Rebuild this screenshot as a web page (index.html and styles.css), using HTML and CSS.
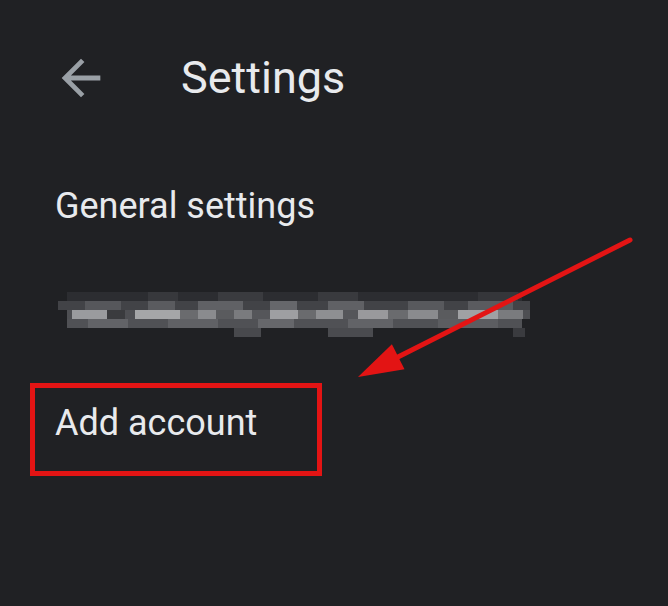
FILE: index.html
```html
<!DOCTYPE html>
<html>
<head>
<meta charset="utf-8">
<link rel="stylesheet" href="styles.css">
</head>
<body>
<div class="screen">
  <header class="topbar">
    <svg class="back" viewBox="0 0 24 24" width="58" height="58"><path d="M20 11H7.83l5.59-5.59L12 4l-8 8 8 8 1.41-1.41L7.83 13H20v-2z" fill="#9aa0a6"/></svg>
    <h1 class="title">Settings</h1>
  </header>
  <ul class="menu">
    <li class="item">General settings</li>
    <li class="item email">
      <svg width="472" height="45" viewBox="0 0 472 45" class="pix">
        <rect x="9" y="0" width="455" height="9" fill="#2c2d31"/>
        <rect x="90" y="0" width="30" height="9" fill="#37383c"/>
        <rect x="160" y="0" width="45" height="9" fill="#3a3b3f"/>
        <rect x="260" y="0" width="40" height="9" fill="#393a3e"/>
        <rect x="420" y="0" width="40" height="9" fill="#35363a"/>
        <rect x="0" y="9" width="472" height="9" fill="#424347"/>
        <rect x="27" y="9" width="36" height="9" fill="#56575b"/>
        <rect x="90" y="9" width="27" height="9" fill="#5a5b5f"/>
        <rect x="140" y="9" width="45" height="9" fill="#606165"/>
        <rect x="212" y="9" width="27" height="9" fill="#66676b"/>
        <rect x="270" y="9" width="36" height="9" fill="#606165"/>
        <rect x="350" y="9" width="36" height="9" fill="#58595d"/>
        <rect x="410" y="9" width="45" height="9" fill="#5a5b5f"/>
        <rect x="9" y="18" width="463" height="9" fill="#4e4f53"/>
        <rect x="14" y="18" width="35" height="9" fill="#9a9b9e"/>
        <rect x="49" y="18" width="18" height="9" fill="#3a3b3e"/>
        <rect x="77" y="18" width="45" height="9" fill="#a5a6a8"/>
        <rect x="122" y="18" width="18" height="9" fill="#6a6b6e"/>
        <rect x="140" y="18" width="18" height="9" fill="#8a8b8e"/>
        <rect x="158" y="18" width="18" height="9" fill="#5a5b5e"/>
        <rect x="176" y="18" width="18" height="9" fill="#7a7b7e"/>
        <rect x="194" y="18" width="18" height="9" fill="#55565a"/>
        <rect x="212" y="18" width="28" height="9" fill="#9e9fa2"/>
        <rect x="240" y="18" width="18" height="9" fill="#6a6b6e"/>
        <rect x="258" y="18" width="27" height="9" fill="#8e8f92"/>
        <rect x="285" y="18" width="15" height="9" fill="#55565a"/>
        <rect x="300" y="18" width="30" height="9" fill="#99999c"/>
        <rect x="330" y="18" width="20" height="9" fill="#6a6b6e"/>
        <rect x="350" y="18" width="30" height="9" fill="#8a8b8e"/>
        <rect x="380" y="18" width="20" height="9" fill="#5a5b5e"/>
        <rect x="400" y="18" width="40" height="9" fill="#a0a1a4"/>
        <rect x="440" y="18" width="25" height="9" fill="#7a7b7e"/>
        <rect x="9" y="27" width="455" height="9" fill="#505155"/>
        <rect x="30" y="27" width="40" height="9" fill="#626367"/>
        <rect x="110" y="27" width="50" height="9" fill="#606165"/>
        <rect x="200" y="27" width="36" height="9" fill="#66676b"/>
        <rect x="290" y="27" width="45" height="9" fill="#626367"/>
        <rect x="380" y="27" width="60" height="9" fill="#5c5d61"/>
        <rect x="176" y="36" width="27" height="9" fill="#48494d"/>
        <rect x="270" y="36" width="45" height="9" fill="#4a4b4f"/>
        <rect x="455" y="36" width="12" height="9" fill="#3a3b3f"/>
      </svg>
    </li>
    <li class="item">Add account</li>
  </ul>
  <div class="highlight"></div>
  <svg class="pointer" width="668" height="606" viewBox="0 0 668 606">
    <line x1="630" y1="240" x2="392" y2="360" stroke="#e31414" stroke-width="5" stroke-linecap="round"/>
    <polygon points="358,377 404.5,369.2 391.9,344.2" fill="#e31414"/>
  </svg>
</div>
</body>
</html>
```
FILE: styles.css
```css
html, body {
  margin: 0;
  padding: 0;
  background: #202124;
}
.screen {
  position: relative;
  width: 668px;
  height: 606px;
  overflow: hidden;
  font-family: Roboto, "Noto Sans", sans-serif;
  color: #e8eaed;
}
.topbar {
  display: flex;
  align-items: center;
  height: 60px;
  margin-top: 48px;
  padding-left: 52px;
}
.back {
  display: block;
  flex: none;
}
.title {
  margin: 0 0 0 71px;
  font-size: 45px;
  font-weight: 400;
  line-height: 60px;
}
.menu {
  list-style: none;
  margin: 0;
  padding: 74px 0 0 55px;
  display: flex;
  flex-direction: column;
  gap: 62px;
}
.item {
  font-size: 36px;
  line-height: 48px;
  height: 48px;
}
.item.email {
  height: 45px;
  margin-left: 3px;
}
.pix {
  display: block;
  filter: blur(0.6px);
}
.highlight {
  position: absolute;
  left: 30px;
  top: 383px;
  width: 292px;
  height: 93px;
  box-sizing: border-box;
  border: 5px solid #e31414;
}
.pointer {
  position: absolute;
  left: 0;
  top: 0;
}
```
